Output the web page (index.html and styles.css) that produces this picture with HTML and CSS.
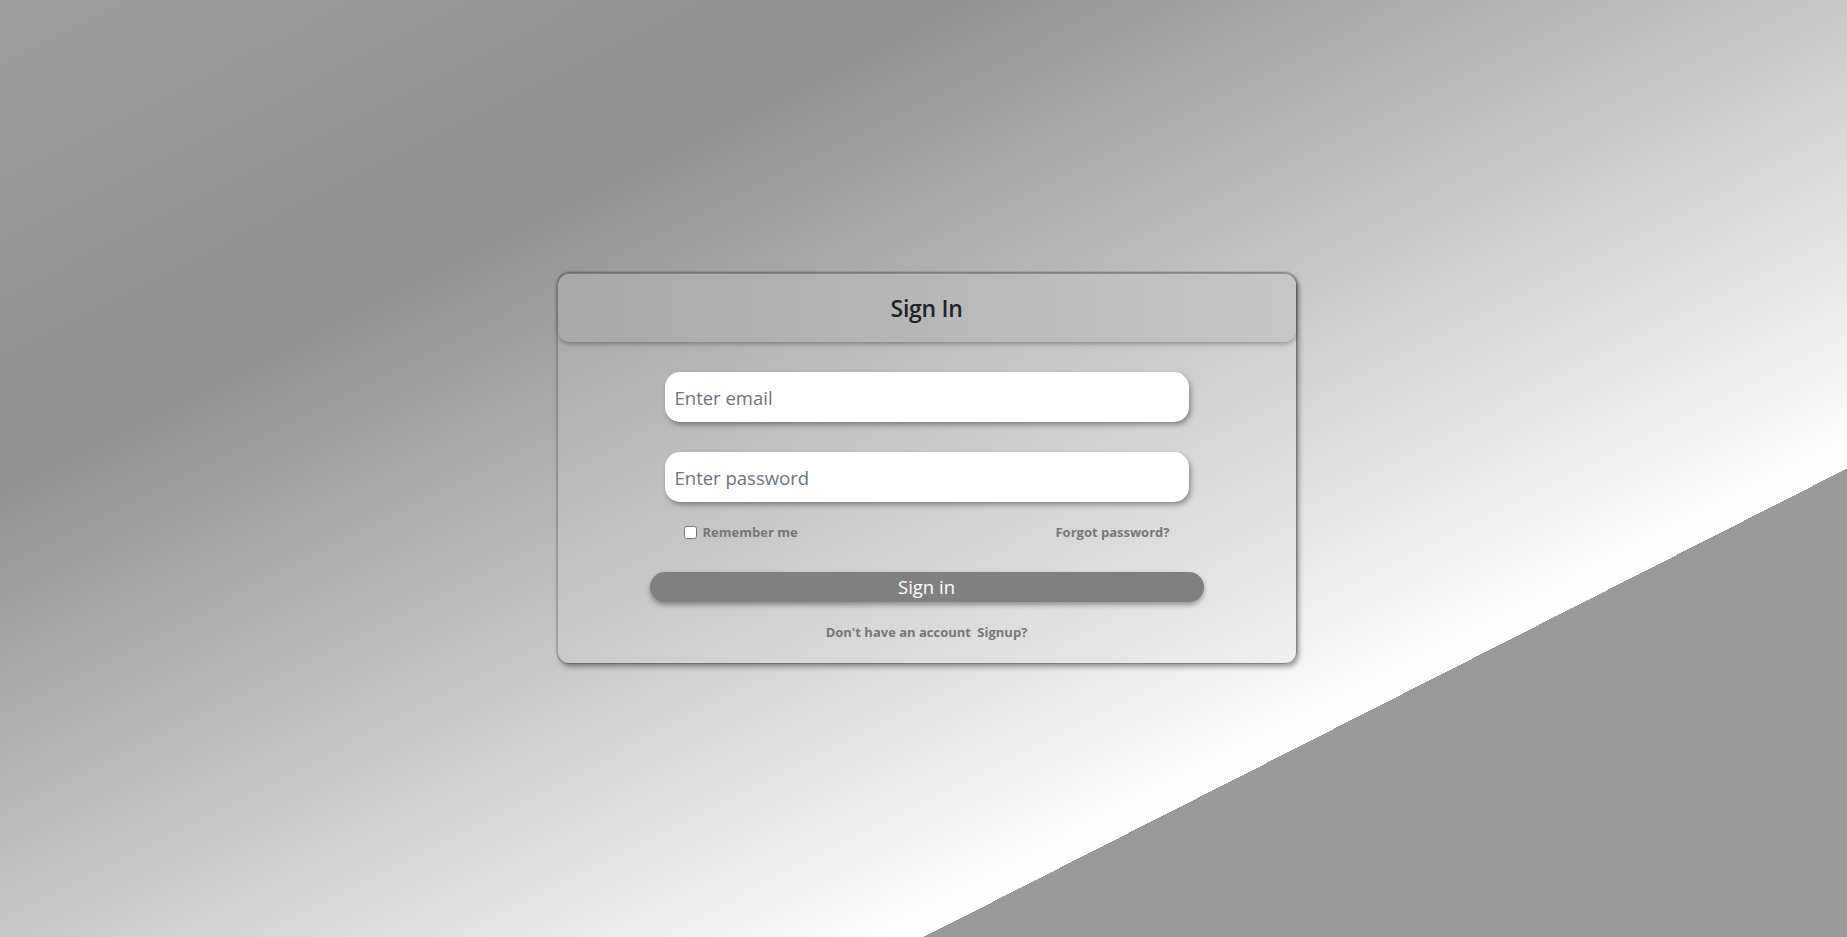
FILE: index.html
```html
<!DOCTYPE html>
<html lang="en">
<head>
<meta charset="utf-8">
<title>Sign In</title>
<link rel="stylesheet" href="styles.css">
</head>
<body>
<main class="page">
  <section class="card">
    <header class="card-header">
      <h3 class="title">Sign In</h3>
    </header>
    <form class="card-body">
      <input class="field" type="email" placeholder="Enter email">
      <input class="field" type="password" placeholder="Enter password">
      <div class="options">
        <label class="remember"><input type="checkbox" class="check"> Remember me</label>
        <a class="link" href="#">Forgot password?</a>
      </div>
      <button class="btn" type="button">Sign in</button>
      <p class="signup">Don't have an account <a class="link signup-link" href="#">Signup?</a></p>
    </form>
  </section>
</main>
</body>
</html>
```
FILE: styles.css
```css
* { box-sizing: border-box; }
html, body { margin: 0; height: 100%; }
body {
  font-family: "Open Sans", "Noto Sans", sans-serif;
  background: linear-gradient(to bottom right, #9d9d9d 0%, #8f8f8f 25%, #ffffff 75%, #999999 75%, #999999 100%);
  overflow: hidden;
}
.page {
  height: 100vh;
  display: flex;
  align-items: center;
  justify-content: center;
  padding-left: 6px;
}
.card {
  width: 740px;
  height: 391px;
  border-radius: 12px;
  border: 1px solid rgba(0,0,0,0.35);
  background: linear-gradient(to bottom right, #a5a5a5 0%, #cbcbcb 50%, #f0f0f0 100%);
  box-shadow: 0 -1px 2px rgba(0,0,0,0.35), 2px 3px 5px rgba(0,0,0,0.35);
  display: flex;
  flex-direction: column;
}
.card-header {
  height: 68px;
  border-radius: 12px;
  background: linear-gradient(to right, #a8a8a8, #c6c6c6);
  box-shadow: 0 2px 4px rgba(0,0,0,0.3);
  display: flex;
  align-items: center;
  justify-content: center;
}
.title {
  margin: 0;
  font-size: 23px;
  font-weight: 600;
  color: #212529;
  letter-spacing: -0.3px;
}
.card-body {
  display: flex;
  flex-direction: column;
  align-items: center;
  padding-top: 30px;
}
.field {
  width: 524px;
  height: 50px;
  border: none;
  border-radius: 15px;
  background: #fff;
  padding: 0 10px;
  font-family: inherit;
  font-size: 18.5px;
  color: #495057;
  box-shadow: 2px 3px 5px rgba(0,0,0,0.35);
  outline: none;
  margin-bottom: 30px;
}
.field::placeholder { color: #6c757d; }
.options {
  width: 524px;
  margin-top: -10px;
  padding: 0 19px;
  display: flex;
  justify-content: space-between;
  align-items: center;
  height: 20px;
}
.remember {
  display: flex;
  align-items: center;
  gap: 6px;
  font-size: 13px;
  font-weight: 700;
  color: #777;
}
.check {
  margin: 0;
  width: 13px;
  height: 13px;
}
.link {
  font-size: 13px;
  font-weight: 700;
  color: #777;
  text-decoration: none;
}
.btn {
  margin-top: 30px;
  width: 554px;
  height: 30px;
  border: none;
  border-radius: 15px;
  background: #808080;
  color: #fff;
  font-family: inherit;
  font-size: 18.5px;
  line-height: 30px;
  padding: 0;
  box-shadow: 0 3px 5px rgba(0,0,0,0.35);
}
.signup {
  margin: 21px 0 0;
  font-size: 13px;
  font-weight: 700;
  color: #777;
}
.signup-link { margin-left: 3px; }
```
